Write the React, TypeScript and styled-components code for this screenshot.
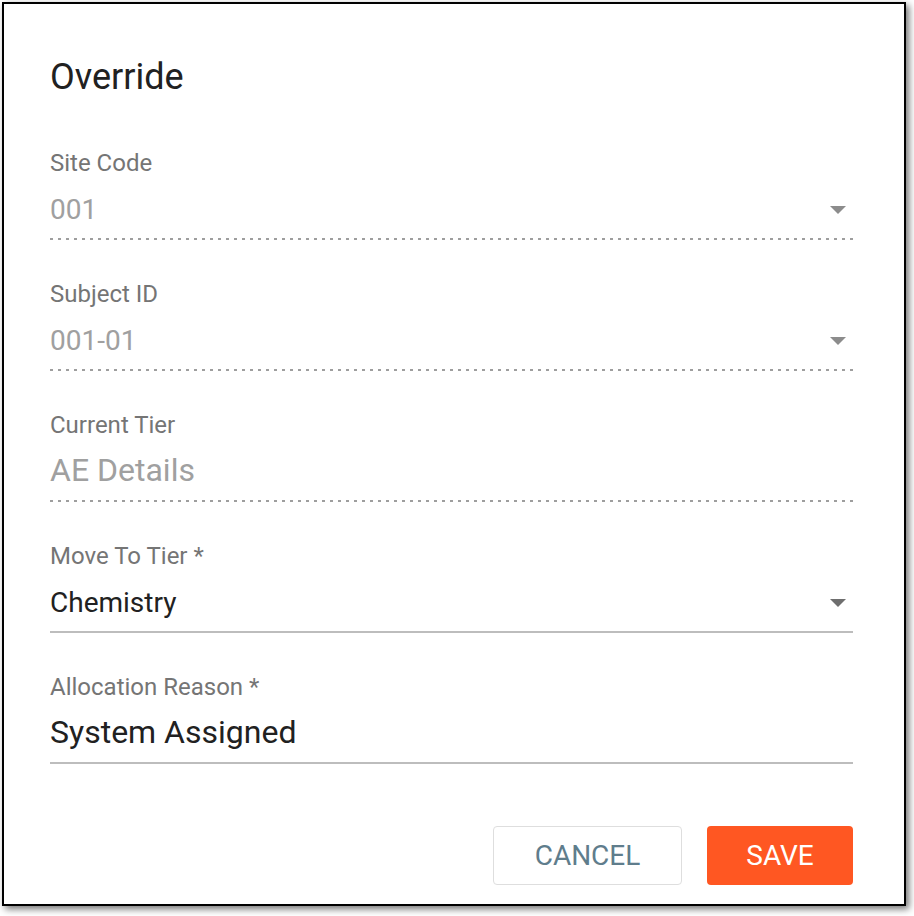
import React from "react";
import styled, { createGlobalStyle } from "styled-components";

const Global = createGlobalStyle`
  html, body { margin: 0; padding: 0; background: #ffffff; }
  body { font-family: Roboto, "Liberation Sans", Arial, sans-serif; }
  * { box-sizing: border-box; }
`;

const Page = styled.div`
  padding: 2px 0 0 2px;
  width: 914px;
  height: 916px;
`;

const Dialog = styled.div`
  width: 904px;
  height: 904px;
  border: 2px solid #000;
  background: #fff;
  box-shadow: 3px 3px 7px rgba(0, 0, 0, 0.55);
  padding: 53px 51px 19px 46px;
  display: flex;
  flex-direction: column;
`;

const Title = styled.h2`
  margin: 0 0 52px;
  font-size: 36px;
  line-height: 40px;
  font-weight: 400;
  color: #212121;
`;

const Fields = styled.div`
  display: flex;
  flex-direction: column;
  gap: 40px;
`;

const Field = styled.div`
  display: flex;
  flex-direction: column;
`;

const Label = styled.div`
  font-size: 24px;
  line-height: 28px;
  color: #757575;
  margin-bottom: 15px;
`;

const ValueRow = styled.div<{ $disabled?: boolean; $select?: boolean }>`
  display: flex;
  align-items: ${(p) => (p.$select ? "center" : "flex-start")};
  justify-content: space-between;
  height: 36px;
  font-size: ${(p) => (p.$select ? "28px" : "32px")};
  line-height: ${(p) => (p.$select ? "36px" : "33px")};
  color: ${(p) => (p.$disabled ? "#a0a0a0" : "#212121")};
  margin-bottom: 10px;
`;

const Arrow = styled.span<{ $disabled?: boolean }>`
  width: 0;
  height: 0;
  margin-right: 7px;
  border-left: 8px solid transparent;
  border-right: 8px solid transparent;
  border-top: 8px solid ${(p) => (p.$disabled ? "#8c8c8c" : "#6e6e6e")};
`;

const Underline = styled.div<{ $disabled?: boolean }>`
  height: 2px;
  background: ${(p) =>
    p.$disabled
      ? "repeating-linear-gradient(to right, #9e9e9e 0 3px, transparent 3px 8px)"
      : "#bdbdbd"};
`;

const Actions = styled.div`
  margin-top: auto;
  display: flex;
  justify-content: flex-end;
  gap: 25px;
`;

const Button = styled.button<{ $primary?: boolean }>`
  height: 59px;
  border-radius: 4px;
  font-family: Roboto, "Liberation Sans", Arial, sans-serif;
  font-size: 28px;
  font-weight: 400;
  cursor: pointer;
  border: ${(p) => (p.$primary ? "none" : "1.5px solid #dedede")};
  background: ${(p) => (p.$primary ? "#ff5722" : "#ffffff")};
  color: ${(p) => (p.$primary ? "#ffffff" : "#5f7d8c")};
  width: ${(p) => (p.$primary ? "146px" : "189px")};
  padding: 0;
`;

type FieldDef = {
  label: string;
  value: string;
  disabled?: boolean;
  select?: boolean;
};

const fields: FieldDef[] = [
  { label: "Site Code", value: "001", disabled: true, select: true },
  { label: "Subject ID", value: "001-01", disabled: true, select: true },
  { label: "Current Tier", value: "AE Details", disabled: true },
  { label: "Move To Tier *", value: "Chemistry", select: true },
  { label: "Allocation Reason *", value: "System Assigned" },
];

export default function App() {
  return (
    <>
      <Global />
      <Page>
        <Dialog>
          <Title>Override</Title>
          <Fields>
            {fields.map((f) => (
              <Field key={f.label}>
                <Label>{f.label}</Label>
                <ValueRow $disabled={f.disabled} $select={f.select}>
                  <span>{f.value}</span>
                  {f.select && <Arrow $disabled={f.disabled} />}
                </ValueRow>
                <Underline $disabled={f.disabled} />
              </Field>
            ))}
          </Fields>
          <Actions>
            <Button>CANCEL</Button>
            <Button $primary>SAVE</Button>
          </Actions>
        </Dialog>
      </Page>
    </>
  );
}
